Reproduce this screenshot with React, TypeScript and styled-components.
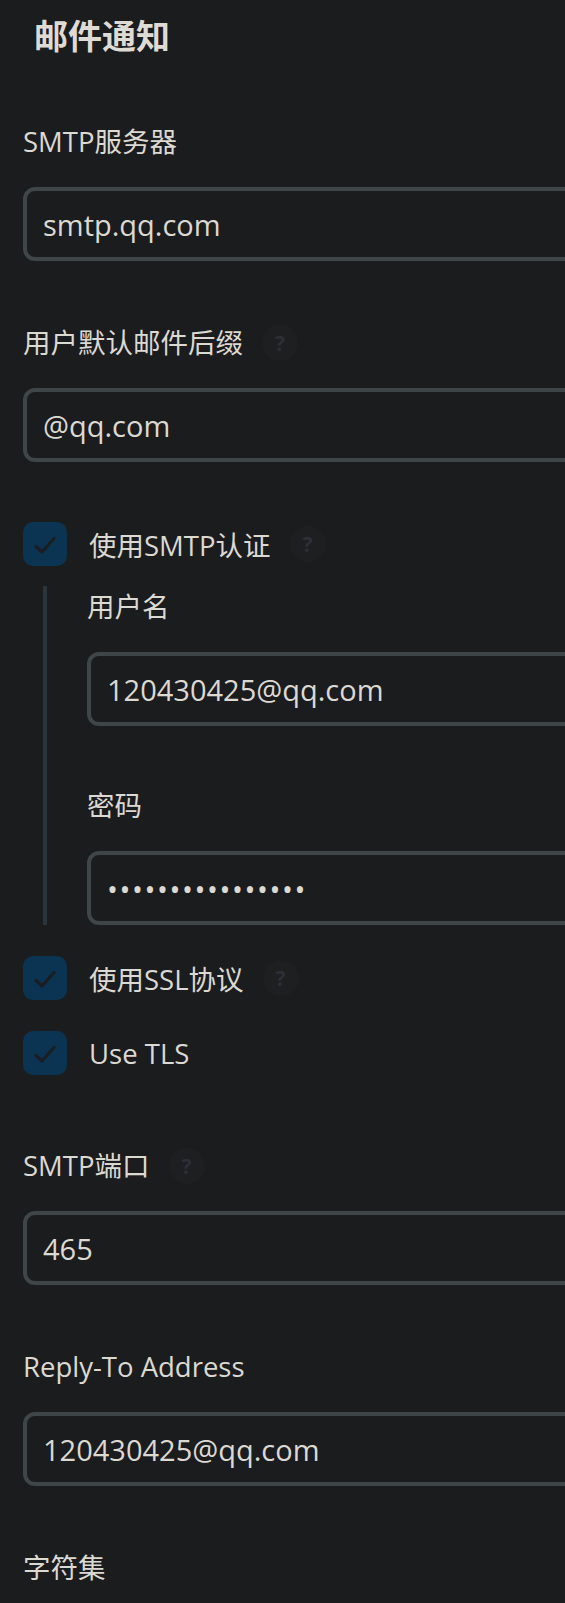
import React, { FC } from 'react';
import styled, { createGlobalStyle } from 'styled-components';

const GlobalStyle = createGlobalStyle`
    html, body { margin: 0; padding: 0; background: #1b1c1e; overflow: hidden; }
    body { font-family: 'Open Sans', 'Noto Sans CJK SC', sans-serif; color: #dcd9d2; }
`;

const Page = styled.div`
    width: 820px;
    padding: 14px 0 40px 23px;
    background: #1b1c1e;
`;

const Title = styled.h2`
    margin: 0 0 64px 11px;
    font: 700 34px/44px 'Open Sans', 'Noto Sans CJK SC', sans-serif;
    color: #dedbd4;
`;

const Group = styled.div<{ $gap?: number }>`
    display: flex;
    flex-direction: column;
    gap: 25px;
    margin-bottom: ${p => (p.$gap ?? 62)}px;
`;

const Label = styled.label`
    display: flex;
    align-items: center;
    height: 40px;
    font-size: 27.5px;
    line-height: 40px;
    color: #dcd9d2;
`;

const Help = styled.span`
    display: inline-flex;
    align-items: center;
    justify-content: center;
    width: 36px;
    height: 36px;
    margin-left: 19px;
    border-radius: 50%;
    background: #1e1f21;
    color: #2c2f37;
    font: 700 21px/1 'Open Sans', sans-serif;
`;

const Input = styled.input<{ $secret?: boolean }>`
    box-sizing: border-box;
    width: 780px;
    height: 74px;
    padding: 0 16px;
    border: 4px solid #3f4647;
    border-radius: 12px;
    background: #1b1c1e;
    color: #dcd9d2;
    font: 400 29px 'Open Sans', 'Noto Sans CJK SC', sans-serif;
    letter-spacing: ${p => (p.$secret ? '1.6px' : 'normal')};
    outline: none;
`;

const CheckRow = styled.div<{ $gap?: number }>`
    display: flex;
    align-items: center;
    height: 44px;
    gap: 22px;
    margin-bottom: ${p => (p.$gap ?? 31)}px;
    font-size: 27.5px;
    color: #dcd9d2;
`;

const Box = styled.span`
    display: inline-flex;
    align-items: center;
    justify-content: center;
    width: 44px;
    height: 44px;
    border-radius: 10px;
    background: #0b3453;
    flex-shrink: 0;
`;

const CheckText = styled.span`
    display: flex;
    align-items: center;
`;

const Nested = styled.div`
    margin: 0 0 31px 20px;
    padding: 1px 0 0 40px;
    border-left: 4px solid #2d353c;
`;

const Check: FC = () => (
    <Box>
        <svg width="44" height="44" viewBox="0 0 44 44">
            <path d="M13 24.5 L19 30 L31 16.5" fill="none" stroke="#1a1d21" strokeWidth="3.2" strokeLinecap="round" strokeLinejoin="round"/>
        </svg>
    </Box>
);

export default function App() {
    return (
        <Page>
            <GlobalStyle/>
            <Title>邮件通知</Title>

            <Group>
                <Label>SMTP服务器</Label>
                <Input defaultValue="smtp.qq.com"/>
            </Group>

            <Group $gap={60}>
                <Label>用户默认邮件后缀<Help>?</Help></Label>
                <Input defaultValue="@qq.com"/>
            </Group>

            <CheckRow $gap={20}>
                <Check/>
                <CheckText>使用SMTP认证<Help>?</Help></CheckText>
            </CheckRow>

            <Nested>
                <Group $gap={60}>
                    <Label>用户名</Label>
                    <Input defaultValue="120430425@qq.com"/>
                </Group>
                <Group $gap={0}>
                    <Label>密码</Label>
                    <Input type="password" $secret defaultValue="abcdefghijklmnop"/>
                </Group>
            </Nested>

            <CheckRow>
                <Check/>
                <CheckText>使用SSL协议<Help>?</Help></CheckText>
            </CheckRow>
            <CheckRow $gap={71}>
                <Check/>
                <CheckText>Use TLS</CheckText>
            </CheckRow>

            <Group>
                <Label>SMTP端口<Help>?</Help></Label>
                <Input defaultValue="465"/>
            </Group>

            <Group>
                <Label>Reply-To Address</Label>
                <Input defaultValue="120430425@qq.com"/>
            </Group>

            <Group>
                <Label>字符集</Label>
            </Group>
        </Page>
    );
}
